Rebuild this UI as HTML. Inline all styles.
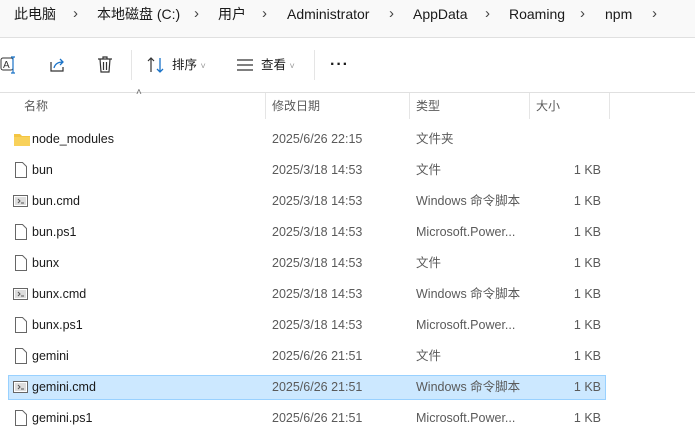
<!DOCTYPE html>
<html><head><meta charset="utf-8"><style>
body{margin:0;width:695px;height:444px;overflow:hidden;background:#fff;font-family:"Liberation Sans","Noto Sans CJK SC",sans-serif;font-size:13px;color:#1a1a1a;position:relative}
.abs{position:absolute;white-space:nowrap;line-height:18px}
.top{position:absolute;left:0;top:0;width:695px;height:37px;background:#f9f9f9;border-bottom:1px solid #e0e0e0}
.bc{top:5px;font-size:14px;color:#1a1a1a}
.ch{top:5px;font-size:15px;color:#444}
.tb{position:absolute;left:0;top:92px;width:695px;height:1px;background:#e0e0e0}
.hd{top:97px;font-size:12px;color:#5a5a5a}
.sep{position:absolute;top:93px;width:1px;height:26px;background:#e5e5e5}
.row{position:absolute;left:8px;width:598px;height:24px}
.row span{position:absolute;top:3px;font-size:12.5px;line-height:18px;white-space:nowrap}
.n{left:24px;color:#1a1a1a}.d{left:264px;color:#5a5a5a}.t{left:408px;color:#5a5a5a}.s{right:5px;color:#5a5a5a}
.ic{position:absolute;left:5px;top:4px}
</style></head><body>
<div class="top"></div>
<div class="abs bc" style="left:14px">此电脑</div><div class="abs ch" style="left:73px">›</div>
<div class="abs bc" style="left:97px">本地磁盘 (C:)</div><div class="abs ch" style="left:194px">›</div>
<div class="abs bc" style="left:218px">用户</div><div class="abs ch" style="left:262px">›</div>
<div class="abs bc" style="left:287px">Administrator</div><div class="abs ch" style="left:389px">›</div>
<div class="abs bc" style="left:413px">AppData</div><div class="abs ch" style="left:485px">›</div>
<div class="abs bc" style="left:509px">Roaming</div><div class="abs ch" style="left:580px">›</div>
<div class="abs bc" style="left:605px">npm</div><div class="abs ch" style="left:652px">›</div>

<svg class="abs" style="left:0;top:55px" width="20" height="20"><rect x="1" y="3" width="12" height="12" rx="2" fill="none" stroke="#333"/><text x="3" y="13" font-size="10" fill="#333" font-family="Liberation Sans">A</text><path d="M13 2v16M11 2h4M11 18h4" stroke="#1a73c8" stroke-width="1.2"/></svg>
<svg class="abs" style="left:48px;top:55px" width="20" height="20"><path d="M3 7v9h12v-4" fill="none" stroke="#333" stroke-width="1.2"/><path d="M6 13c1-4 4-6 9-6M12 4l3 3-3 3" fill="none" stroke="#1a73c8" stroke-width="1.3"/></svg>
<svg class="abs" style="left:95px;top:55px" width="20" height="20"><path d="M3 4h14M8 4V2h4v2M5 4l1 13h8l1-13M8.5 7v8M11.5 7v8" fill="none" stroke="#333" stroke-width="1.2"/></svg>
<div style="position:absolute;left:131px;top:50px;width:1px;height:30px;background:#e5e5e5"></div>
<svg class="abs" style="left:146px;top:56px" width="20" height="18"><path d="M5 16V2M2 5l3-3 3 3" fill="none" stroke="#333" stroke-width="1.2"/><path d="M14 2v14M11 13l3 3 3-3" fill="none" stroke="#1a73c8" stroke-width="1.3"/></svg>
<div class="abs" style="left:172px;top:56px;font-size:12.5px">排序 <span style="color:#999;font-size:9px">˅</span></div>
<svg class="abs" style="left:236px;top:58px" width="18" height="14"><path d="M1 2h16M1 7h16M1 12h16" stroke="#333" stroke-width="1.2"/></svg>
<div class="abs" style="left:261px;top:56px;font-size:12.5px">查看 <span style="color:#999;font-size:9px">˅</span></div>
<div style="position:absolute;left:314px;top:50px;width:1px;height:30px;background:#e5e5e5"></div>
<div class="abs" style="left:330px;top:56px;font-size:16px;font-weight:bold;letter-spacing:1px">···</div>
<div class="tb"></div>
<div class="abs" style="left:136px;top:84px;font-size:10px;color:#666">˄</div>
<div class="abs hd" style="left:24px">名称</div>
<div class="sep" style="left:265px"></div><div class="abs hd" style="left:272px">修改日期</div>
<div class="sep" style="left:409px"></div><div class="abs hd" style="left:416px">类型</div>
<div class="sep" style="left:529px"></div><div class="abs hd" style="left:536px">大小</div>
<div class="sep" style="left:609px"></div>

<div class="row" style="top:127px"><svg class="ic" width="18" height="16"><path d="M1 3h6l2 2h8v10H1z" fill="#f4c542"/><path d="M1 6h16v9H1z" fill="#f8d15a"/></svg><span class="n">node_modules</span><span class="d">2025/6/26 22:15</span><span class="t">文件夹</span></div>
<div class="row" style="top:158px"><svg class="ic" width="16" height="16"><path d="M2.5 .5h7l4 4v11h-11z" fill="#fff" stroke="#666"/></svg><span class="n">bun</span><span class="d">2025/3/18 14:53</span><span class="t">文件</span><span class="s">1 KB</span></div>
<div class="row" style="top:189px"><svg class="ic" width="16" height="16"><rect x=".5" y="2.5" width="14" height="11" fill="#fff" stroke="#666"/><rect x="2" y="4" width="11" height="8" fill="#ddd"/><path d="M5 6l2 2-2 2M8 10h3" stroke="#555" fill="none"/></svg><span class="n">bun.cmd</span><span class="d">2025/3/18 14:53</span><span class="t">Windows 命令脚本</span><span class="s">1 KB</span></div>
<div class="row" style="top:220px"><svg class="ic" width="16" height="16"><path d="M2.5 .5h7l4 4v11h-11z" fill="#fff" stroke="#666"/></svg><span class="n">bun.ps1</span><span class="d">2025/3/18 14:53</span><span class="t">Microsoft.Power...</span><span class="s">1 KB</span></div>
<div class="row" style="top:251px"><svg class="ic" width="16" height="16"><path d="M2.5 .5h7l4 4v11h-11z" fill="#fff" stroke="#666"/></svg><span class="n">bunx</span><span class="d">2025/3/18 14:53</span><span class="t">文件</span><span class="s">1 KB</span></div>
<div class="row" style="top:282px"><svg class="ic" width="16" height="16"><rect x=".5" y="2.5" width="14" height="11" fill="#fff" stroke="#666"/><rect x="2" y="4" width="11" height="8" fill="#ddd"/><path d="M5 6l2 2-2 2M8 10h3" stroke="#555" fill="none"/></svg><span class="n">bunx.cmd</span><span class="d">2025/3/18 14:53</span><span class="t">Windows 命令脚本</span><span class="s">1 KB</span></div>
<div class="row" style="top:313px"><svg class="ic" width="16" height="16"><path d="M2.5 .5h7l4 4v11h-11z" fill="#fff" stroke="#666"/></svg><span class="n">bunx.ps1</span><span class="d">2025/3/18 14:53</span><span class="t">Microsoft.Power...</span><span class="s">1 KB</span></div>
<div class="row" style="top:344px"><svg class="ic" width="16" height="16"><path d="M2.5 .5h7l4 4v11h-11z" fill="#fff" stroke="#666"/></svg><span class="n">gemini</span><span class="d">2025/6/26 21:51</span><span class="t">文件</span><span class="s">1 KB</span></div>
<div class="row" style="top:375px;background:#cce8ff;border:1px solid #99d1ff;box-sizing:border-box;height:25px"><svg class="ic" width="16" height="16" style="top:3px;left:4px"><rect x=".5" y="2.5" width="14" height="11" fill="#fff" stroke="#666"/><rect x="2" y="4" width="11" height="8" fill="#ddd"/><path d="M5 6l2 2-2 2M8 10h3" stroke="#555" fill="none"/></svg><span class="n" style="top:2px;left:23px">gemini.cmd</span><span class="d" style="top:2px;left:263px">2025/6/26 21:51</span><span class="t" style="top:2px;left:407px">Windows 命令脚本</span><span class="s" style="top:2px;right:4px">1 KB</span></div>
<div class="row" style="top:406px"><svg class="ic" width="16" height="16"><path d="M2.5 .5h7l4 4v11h-11z" fill="#fff" stroke="#666"/></svg><span class="n">gemini.ps1</span><span class="d">2025/6/26 21:51</span><span class="t">Microsoft.Power...</span><span class="s">1 KB</span></div>
</body></html>
